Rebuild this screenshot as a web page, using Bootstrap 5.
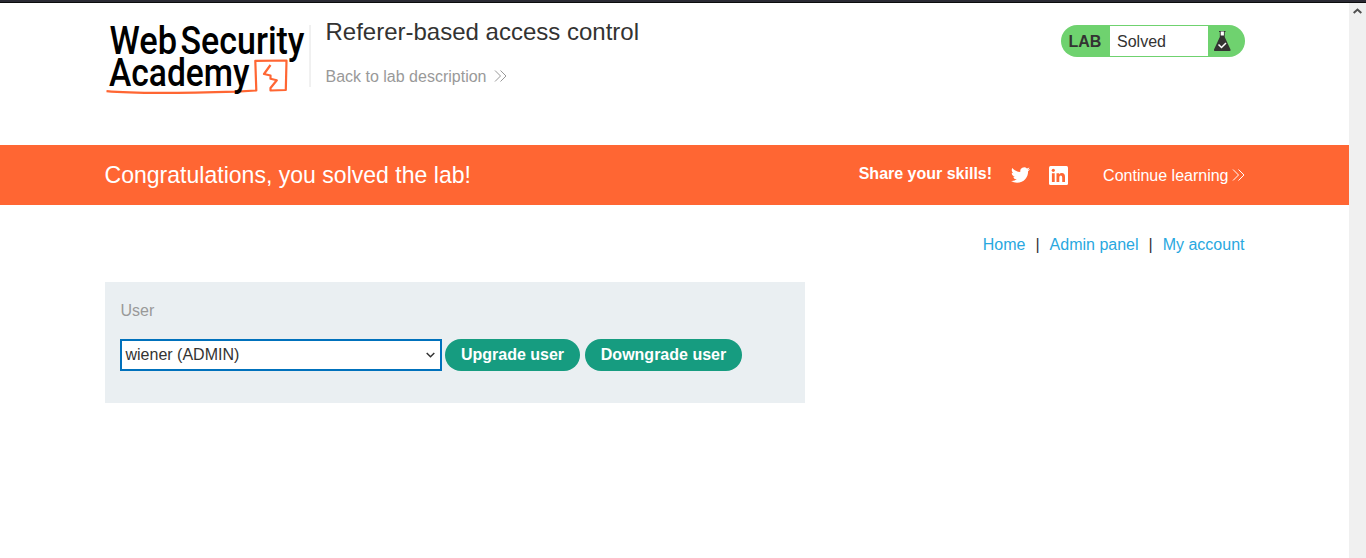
<!DOCTYPE html>
<html lang="en">
<head>
<meta charset="utf-8">
<title>Referer-based access control</title>
<link href="https://cdn.jsdelivr.net/npm/bootstrap@5.3.0/dist/css/bootstrap.min.css" rel="stylesheet">
<style>
body{font-family:"Liberation Sans",Arial,sans-serif;font-size:16px;line-height:20px;color:#333332;height:558px;overflow:hidden}
.topline{height:3px;background:#2b2a33;border-bottom:1px solid #0c0c0d}
.scroller{width:17px;background:#f0f0f0;padding-top:5px}
.wrap{width:1140px;margin:0 auto}
.head{height:142px;padding-top:22px}
.logo{width:205px;height:74px;margin-right:16px;overflow:visible}
.logo text{font-family:Roboto,sans-serif;font-weight:500;font-size:38px}
.rule{fill:none;stroke:#e2e2e2}
h1{font-size:24px;line-height:28px;margin:-7px 0 0}
.back{color:#999;text-decoration:none;margin-top:21px}
.back svg{margin:-4px 0 0 3px}
.status{width:184px;height:32px;border-radius:16px;background:#6fd26f;padding:1px 0}
.status b{width:49px;padding-left:8px;line-height:32px}
.status span{width:98px;background:#fff;padding-left:7.5px;line-height:31px}
.banner{height:60px;background:#f63;color:#fff}
.banner h2{font-size:23.05px;line-height:28px}
.share{padding-bottom:2px}
.twitter{margin-left:19px}
.linkedin{margin-left:19px}
.more{margin-left:35px;padding-top:2px}
.more-arrow{margin-left:3px}
.links{height:77px;padding-top:30px;gap:10px;color:#333}
.links a{color:#29a8df;text-decoration:none}
.panel{width:700px;height:121px;background:#eaeff2;padding:19px 15.5px}
.panel label{color:#999;margin-bottom:18px;padding-left:.5px}
.pick{width:322px;height:32px;background:#fff;border:2px solid #0071bc;padding:0 5px 0 3.5px}
.act{height:32px;border-radius:16px;background:#169c80;color:#fff;font-weight:700;border:0}
.act-up{width:135px;margin-left:3px}
.act-down{width:157px;margin-left:5px}
</style>
</head>
<body class="d-flex flex-column bg-white">
<div class="topline"></div>
<div class="d-flex flex-grow-1">
<div class="flex-grow-1">
<header class="wrap head d-flex align-items-start">
<svg class="logo" viewBox="104.5 25 205 74" role="img" aria-label="Web Security Academy">
<g fill="#000">
<text x="109" y="53.5" textLength="67.5" lengthAdjust="spacingAndGlyphs">Web</text>
<text x="180" y="53.5" textLength="124" lengthAdjust="spacingAndGlyphs">Security</text>
</g>
<path d="M106 91.2C130 93.400 190 93 236 91.600L255.800 90.500 254.800 60.800 286 60.500 285.300 90 270 90.500V88L276.300 80.300 270 78.800 270 75.500 263.500 74 270 65" fill="none" stroke="#f63" stroke-width="2.200" stroke-linejoin="round"/>
<text x="108.5" y="86" textLength="140.5" lengthAdjust="spacingAndGlyphs">Academy</text>
<path class="rule" d="M309.500 25V87"/>
</svg>
<div class="d-flex flex-column">
<h1 class="fw-normal">Referer-based access control</h1>
<a class="back" href="#">Back to lab description <svg width="14" height="14" viewBox="0 0 14 14" fill="none" stroke="#999"><path d="M1 1.500 6.500 7 1 12.500M6.500 1.500 12 7 6.500 12.500"/></svg></a>
</div>
<div class="status ms-auto d-flex"><b>LAB</b><span>Solved</span>
<svg width="32" height="30" viewBox="0 0 32 30"><path d="M11 5H17.500V6H16.700V11L22.500 23.500Q23 25 21.500 25H7Q5.500 25 6 23.500L11.800 11V6H11Z" fill="#333332"/><path d="M12.700 5.500H15.900V9.500H12.700Z" fill="#fff"/><path d="M10.500 18.500 13.500 21.500 18 17" fill="none" stroke="#fff" stroke-width="1.500"/></svg></div>
</header>
<section class="banner"><div class="wrap h-100 d-flex align-items-center">
<h2 class="fw-normal m-0">Congratulations, you solved the lab!</h2>
<strong class="share ms-auto">Share your skills!</strong>
<svg class="twitter" width="19" height="20" viewBox="0 0 24 24" fill="#fff"><path d="M23.950 4.570a10 10 0 0 1-2.820.775 4.960 4.960 0 0 0 2.160-2.720c-.95.555-2 .96-3.130 1.180a4.920 4.920 0 0 0-8.380 4.480C7.690 8.090 4.070 6.130 1.640 3.160a4.820 4.820 0 0 0-.67 2.480c0 1.710.87 3.210 2.190 4.100a4.900 4.900 0 0 1-2.230-.62v.06a4.920 4.920 0 0 0 3.950 4.830 5 5 0 0 1-2.210.08 4.940 4.940 0 0 0 4.600 3.420A9.870 9.870 0 0 1 0 19.540a13.990 13.990 0 0 0 7.560 2.210c9.050 0 14-7.500 14-13.980 0-.21 0-.42-.02-.63a9.940 9.940 0 0 0 2.460-2.550Z"/></svg>
<svg class="linkedin" width="19" height="19" viewBox="0 0 19 19"><rect width="19" height="19" rx="1.500" fill="#fff"/><g fill="#f63"><circle cx="4.300" cy="4.300" r="1.600"/><path d="M2.900 7.200H5.700V16H2.900ZM7.500 7.200H10.200V8.400Q11 7 12.900 7 16 7 16 10.900V16H13.200V11.500Q13.200 9.400 11.800 9.400 10.300 9.400 10.300 11.500V16H7.500Z"/></g></svg>
<span class="more">Continue learning</span>
<svg class="more-arrow" width="13" height="14" viewBox="0 0 13 14" fill="none" stroke="#fff"><path d="M1 1.500 6.500 7 1 12.500M6.500 1.500 12 7 6.500 12.500"/></svg>
</div></section>
<main class="wrap">
<nav class="links d-flex justify-content-end"><a href="#">Home</a><span>|</span><a href="#">Admin panel</a><span>|</span><a href="#">My account</a></nav>
<form class="panel"><label class="d-block">User</label>
<div class="d-flex"><div class="pick d-flex align-items-center justify-content-between" role="combobox" tabindex="0"><span>wiener (ADMIN)</span><svg width="9" height="6" viewBox="0 0 9 6" fill="none" stroke="#333" stroke-width="1.500"><path d="M.7 1 4.500 4.700 8.300 1"/></svg></div>
<button type="button" class="act act-up">Upgrade user</button><button type="button" class="act act-down">Downgrade user</button></div></form>
</main>
</div>
<div class="scroller d-flex justify-content-center"><svg width="9" height="6" viewBox="0 0 9 6" fill="none" stroke="#505050" stroke-width="2"><path d="M.7 5 4.500 1.500 8.300 5"/></svg></div>
</div>
<script src="https://cdn.jsdelivr.net/npm/bootstrap@5.3.0/dist/js/bootstrap.bundle.min.js"></script>
</body>
</html>
